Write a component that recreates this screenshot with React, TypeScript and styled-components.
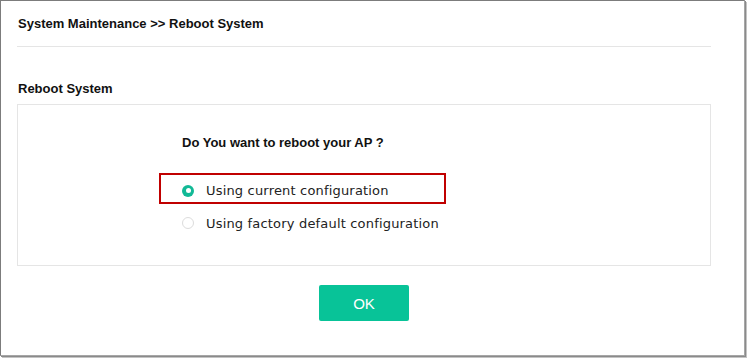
import styled, { createGlobalStyle } from "styled-components";

const GlobalStyle = createGlobalStyle`
  html, body {
    margin: 0;
    padding: 0;
    background: #fff;
  }
  body {
    font-family: "Liberation Sans", Arial, sans-serif;
    color: #111;
  }
`;

const Page = styled.div`
  width: 747px;
  height: 358px;
  box-sizing: border-box;
  padding: 0 2px 2px 0;
`;

const Frame = styled.div`
  width: 745px;
  height: 356px;
  box-sizing: border-box;
  border: 1px solid #7c7c7c;
  border-right-color: #a6a6a6;
  border-bottom-color: #a6a6a6;
  box-shadow: 1px 1px 0 #8a8a8a, 2px 2px 0 #c4c4c4;
  padding: 0 33px 0 16px;
  background: #fff;
`;

const Header = styled.div`
  height: 45px;
  display: flex;
  align-items: center;
  padding-left: 1px;
  border-bottom: 1px solid #e5e5e5;
  font-size: 13px;
  font-weight: bold;
`;

const SectionTitle = styled.div`
  margin-top: 34px;
  padding-left: 1px;
  font-size: 13px;
  line-height: 16px;
  font-weight: bold;
`;

const Panel = styled.div`
  margin-top: 7px;
  height: 162px;
  box-sizing: border-box;
  border: 1px solid #e5e5e5;
  padding: 30px 0 0 164px;
`;

const Question = styled.div`
  font-size: 13px;
  line-height: 16px;
  font-weight: bold;
  margin-bottom: 22px;
`;

const Option = styled.label<{ $marked?: boolean }>`
  display: flex;
  align-items: center;
  gap: 12px;
  box-sizing: border-box;
  font-family: "DejaVu Sans", Verdana, sans-serif;
  font-size: 13px;
  letter-spacing: 0.18px;
  color: #222;
  ${({ $marked }) =>
    $marked
      ? `
    width: 287px;
    height: 31px;
    margin-left: -23px;
    padding: 4px 0 0 21px;
    border: 2px solid #c00000;
  `
      : `
    height: 32px;
    margin-top: 3px;
  `}
`;

const Radio = styled.span<{ $checked?: boolean }>`
  width: 12px;
  height: 12px;
  border-radius: 50%;
  box-sizing: border-box;
  flex: none;
  ${({ $checked }) =>
    $checked
      ? `background: #12b996;
         display: flex; align-items: center; justify-content: center;
         &::after { content: ""; width: 5px; height: 5px; border-radius: 50%; background: #fff; }`
      : `border: 1px solid #dcdcdc; background: #fff;`}
`;

const Actions = styled.div`
  display: flex;
  justify-content: center;
  margin-top: 19px;
`;

const OkButton = styled.button`
  width: 90px;
  height: 36px;
  border: none;
  border-radius: 2px;
  background: #08c398;
  color: #fff;
  font-family: "Liberation Sans", Arial, sans-serif;
  font-size: 15px;
  cursor: pointer;
`;

const options = [
  { label: "Using current configuration", checked: true },
  { label: "Using factory default configuration", checked: false },
];

const App = () => {
  return (
    <Page>
      <GlobalStyle />
      <Frame>
        <Header>System Maintenance &gt;&gt; Reboot System</Header>
        <SectionTitle>Reboot System</SectionTitle>
        <Panel>
          <Question>Do You want to reboot your AP ?</Question>
          {options.map((o) => (
            <Option key={o.label} $marked={o.checked}>
              <Radio $checked={o.checked} />
              {o.label}
            </Option>
          ))}
        </Panel>
        <Actions>
          <OkButton>OK</OkButton>
        </Actions>
      </Frame>
    </Page>
  );
};

export default App;
